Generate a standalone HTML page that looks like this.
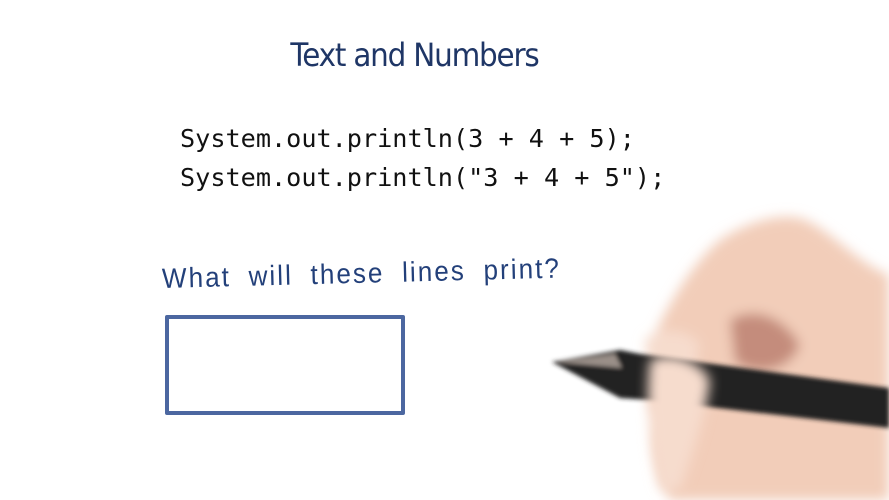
<!DOCTYPE html>
<html><head><meta charset="utf-8"><style>
html,body{margin:0;padding:0;background:#fff;}
body{width:889px;height:500px;overflow:hidden;position:relative;}
.t{position:absolute;left:0;width:829px;text-align:center;top:36px;font:32px "DejaVu Sans","Liberation Sans",sans-serif;color:#1f3666;letter-spacing:-1.3px;transform:scaleX(0.92);transform-origin:414px 0;}
.c{position:absolute;left:180px;font:25.2px "DejaVu Sans Mono","Liberation Mono",monospace;color:#111;white-space:pre;}
.h{position:absolute;left:162px;top:263px;font:28px "Liberation Sans",sans-serif;color:#23407a;letter-spacing:2.2px;word-spacing:9px;transform:rotate(-1.5deg) scaleX(0.93);transform-origin:left;}
.box{position:absolute;left:165px;top:315px;width:232px;height:92px;border:4px solid #4c67a0;border-radius:2px;}
</style></head><body>
<div class="t">Text and Numbers</div>
<div class="c" style="top:124px">System.out.println(3 + 4 + 5);</div>
<div class="c" style="top:163px">System.out.println("3 + 4 + 5");</div>
<div class="h">What will these lines print?</div>
<div class="box"></div>
<svg width="889" height="500" style="position:absolute;left:0;top:0">
<defs>
<filter id="b" x="-20%" y="-20%" width="140%" height="140%"><feGaussianBlur stdDeviation="6"/></filter>
<filter id="b2"><feGaussianBlur stdDeviation="2"/></filter>
</defs>
<g filter="url(#b)">
<path d="M720 240 C750 220 785 212 805 220 C830 230 860 265 889 275 L889 500 L670 500 C655 470 650 440 660 420 C645 400 640 370 650 345 C665 310 690 265 720 240 Z" fill="#f2cdb9"/>
<path d="M730 320 C755 305 785 318 800 345 C790 372 755 378 735 362 Z" fill="#c48c7c"/>
<path d="M645 340 C660 325 690 330 700 345 L690 380 L650 380 Z" fill="#f6dccd"/>
</g>
<g filter="url(#b2)">
<path d="M552 362 L620 350 L640 354 L889 388 L889 428 L650 400 L620 398 Z" fill="#242120"/>
<path d="M556 362 L615 354 L622 368 Z" fill="#9a8f88"/>
</g>
<g filter="url(#b)">
<path d="M650 360 C670 350 700 360 710 380 C705 420 690 460 680 490 L660 490 C650 450 645 400 650 360 Z" fill="#f6dccd"/>
</g>
</svg>
</body></html>
